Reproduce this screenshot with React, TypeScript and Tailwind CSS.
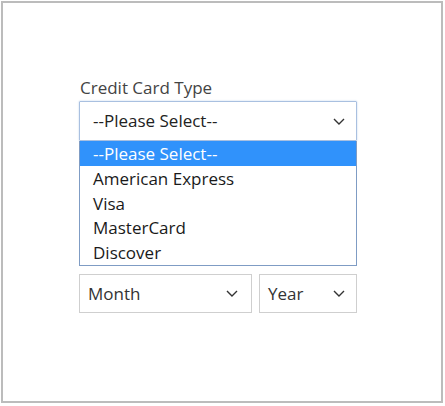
const options = ["--Please Select--", "American Express", "Visa", "MasterCard", "Discover"];

function Chevron({ className }: { className?: string }) {
  return (
    <svg viewBox="0 0 12 7" className={className} fill="none">
      <path d="M1 1l5 5 5-5" stroke="#333" strokeWidth="1.4" />
    </svg>
  );
}

export default function App() {
  return (
    <div className="w-[445px] h-[406px] bg-white p-px font-['Open_Sans',sans-serif]">
      <div className="w-[442px] h-[402px] border-2 border-[#bcbcbc] pl-[76px] pt-[74px]">
        <div className="text-[17px] leading-[22px] text-[#444] pl-px">Credit Card Type</div>
        <div className="w-[278px] mt-[2px]">
          <div className="h-[40px] border border-[#a9c0e0] shadow-[0_0_2px_#bcd0ec] flex items-center justify-between pl-[13px] pr-[11px] text-[17px] text-[#222] rounded-[1px]">
            <span>--Please Select--</span>
            <Chevron className="w-[12px] h-[7px]" />
          </div>
          <div className="border border-[#7f9cc4] border-t-0">
            {options.map((o, i) => (
              <div
                key={o}
                className={`h-[24.8px] leading-[25px] pl-[13px] text-[17px] ${i === 0 ? "bg-[#3092fb] text-white" : "text-[#1a1a1a]"}`}
              >
                {o}
              </div>
            ))}
          </div>
        </div>
        <div className="flex gap-[7px] mt-[8px]">
          <div className="w-[173px] h-[39px] border border-[#cfcfcf] flex items-center justify-between pl-[8px] pr-[13px] text-[17px] text-[#333]">
            <span>Month</span>
            <Chevron className="w-[12px] h-[7px]" />
          </div>
          <div className="w-[98px] h-[39px] border border-[#cfcfcf] flex items-center justify-between pl-[8px] pr-[11px] text-[17px] text-[#333]">
            <span>Year</span>
            <Chevron className="w-[12px] h-[7px]" />
          </div>
        </div>
      </div>
    </div>
  );
}
